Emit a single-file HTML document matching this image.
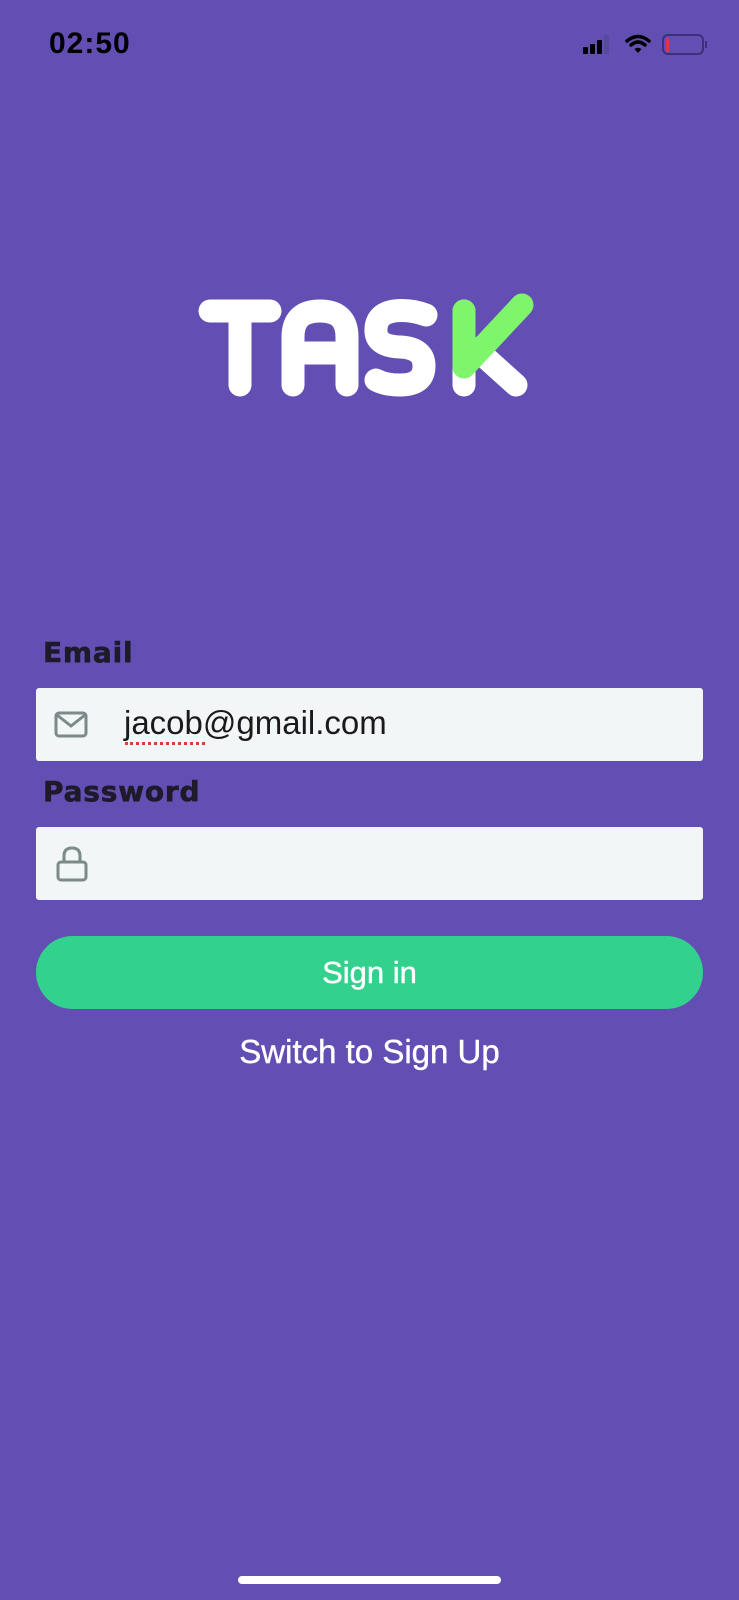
<!DOCTYPE html>
<html><head><meta charset="utf-8"><style>
html,body{margin:0;padding:0;}
body{width:739px;height:1600px;background:#634fb3;position:relative;overflow:hidden;font-family:"Liberation Sans",sans-serif;}
.abs{position:absolute;}
.time{left:49px;top:27px;font-size:30px;font-weight:bold;color:#000;letter-spacing:1px;}
.label{left:43px;font-size:28px;font-weight:bold;color:#1e1a2a;font-family:"DejaVu Sans",sans-serif;letter-spacing:0.8px;-webkit-text-stroke:0.6px #1e1a2a;}
.input{left:36px;width:667px;height:73px;background:#f2f6f6;border-radius:3px;}
.btn{left:36px;top:936px;width:667px;height:73px;background:#33d18e;border-radius:37px;color:#fff;font-size:31px;text-align:center;line-height:73px;-webkit-text-stroke:0.4px #fff;}
.sw{left:0;width:739px;top:1033px;text-align:center;color:#fff;font-size:33px;-webkit-text-stroke:0.4px #fff;}
.home{left:238px;top:1576px;width:263px;height:8px;border-radius:4px;background:#fff;}
</style></head><body>
<div class="abs time">02:50</div>
<svg class="abs" style="left:580px;top:32px" width="130" height="26" viewBox="0 0 130 26">
<rect x="3" y="15" width="5" height="7" rx="1" fill="#000"/>
<rect x="10" y="12" width="5" height="10" rx="1" fill="#000"/>
<rect x="17" y="8" width="5" height="14" rx="1" fill="#000"/>
<rect x="24" y="3" width="5" height="19" rx="1" fill="#5549a0"/>
<g transform="translate(7,0)">
<path d="M40 9 Q51 0 62 9" stroke="#000" stroke-width="3.5" fill="none" stroke-linecap="round"/>
<path d="M44 13 Q51 7 58 13" stroke="#000" stroke-width="3.5" fill="none" stroke-linecap="round"/>
<path d="M47.5 17 L51 21 L54.5 17 Q51 14.5 47.5 17Z" fill="#000"/>
</g>
<rect x="83" y="3" width="40" height="19" rx="5" fill="none" stroke="#3d2f7a" stroke-width="2"/>
<rect x="86" y="6" width="3" height="13" fill="#e0334a"/>
<rect x="125" y="9" width="2" height="7" fill="#3d2f7a"/>
</svg>
<svg class="abs" style="left:190px;top:285px" width="360" height="130" viewBox="0 0 360 130">
<g stroke="#fff" stroke-width="23" stroke-linecap="round" stroke-linejoin="round" fill="none">
<path d="M20 26 H80 M50 26 V100"/>
<path d="M103 100 V52 Q103 26 130 26 Q157 26 157 52 V100 M103 68 H157"/>
<path d="M236 30 Q220 24 204 26 Q185 29 186 47 Q187 61 210 62 Q234 63 234 81 Q234 100 210 100 Q195 100 186 95"/>
<path d="M274 26 V100 M286 64 L326 100"/>
</g>
<path d="M274 82 L332 20" stroke="#7ef56a" stroke-width="23" stroke-linecap="round"/>
<path d="M274 26 V78" stroke="#7ef56a" stroke-width="23" stroke-linecap="round"/>
</svg>
<div class="abs label" style="top:636px">Email</div>
<div class="abs input" style="top:688px">
<svg class="abs" style="left:18px;top:23px" width="34" height="27" viewBox="0 0 34 27"><rect x="2" y="2" width="30" height="23" rx="3" fill="none" stroke="#7c8a89" stroke-width="3"/><path d="M3 4 L17 15 L31 4" fill="none" stroke="#7c8a89" stroke-width="3"/></svg>
<div class="abs" style="left:88px;top:16px;font-size:33px;color:#1a1a1a">jacob@gmail.com</div>
<div class="abs" style="left:89px;top:54px;width:80px;border-top:3px dotted #e03a3a"></div>
</div>
<div class="abs label" style="top:775px">Password</div>
<div class="abs input" style="top:827px">
<svg class="abs" style="left:19px;top:18px" width="34" height="38" viewBox="0 0 34 38"><path d="M9 17 V11 Q9 3 17 3 Q25 3 25 11 V17" fill="none" stroke="#7c8a89" stroke-width="3"/><rect x="3" y="17" width="28" height="18" rx="3" fill="none" stroke="#7c8a89" stroke-width="3"/></svg>
</div>
<div class="abs btn">Sign in</div>
<div class="abs sw">Switch to Sign Up</div>
<div class="abs home"></div>
</body></html>
